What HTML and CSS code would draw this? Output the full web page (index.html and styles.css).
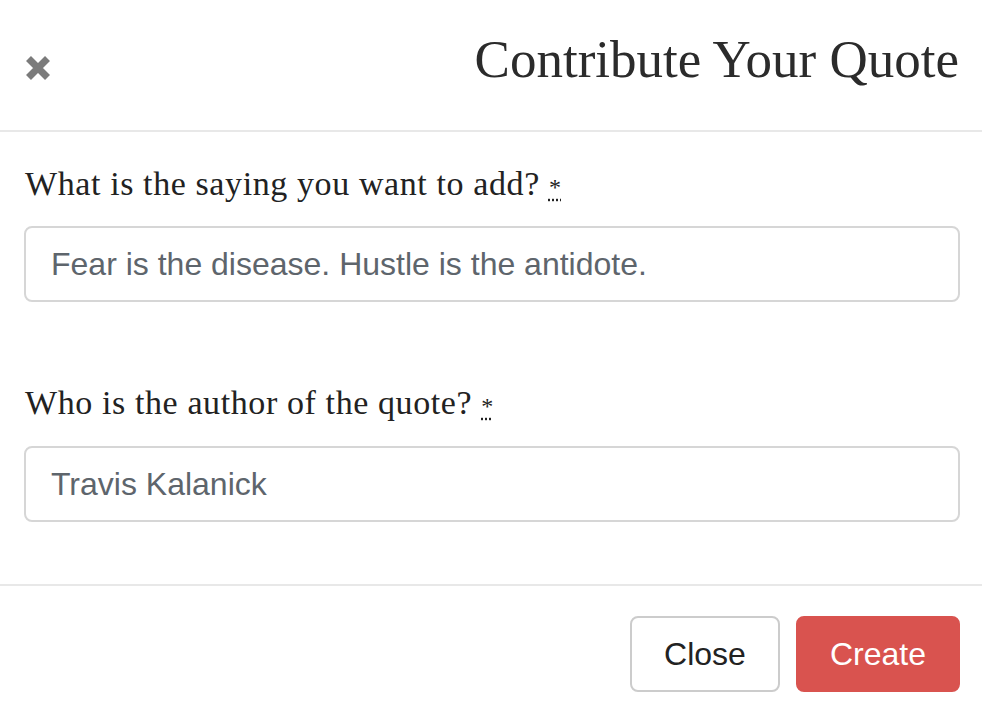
FILE: index.html
```html
<!DOCTYPE html>
<html lang="en">
<head>
<meta charset="utf-8">
<title>Contribute Your Quote</title>
<link rel="stylesheet" href="styles.css">
</head>
<body>
<div class="modal">
  <div class="modal-header">
    <button class="close-btn" type="button" aria-label="Close">
      <svg width="26" height="26" viewBox="0 0 26 26"><path d="M3.5 3.5 L22.5 22.5 M22.5 3.5 L3.5 22.5" stroke="#7b7b7b" stroke-width="7" stroke-linecap="butt" fill="none"/></svg>
    </button>
    <h1 class="title">Contribute Your Quote</h1>
  </div>
  <form class="modal-body">
    <label class="field-label first">What is the saying you want to add? <abbr title="required">*</abbr></label>
    <div class="input first">Fear is the disease. Hustle is the antidote.</div>
    <label class="field-label second">Who is the author of the quote? <abbr title="required">*</abbr></label>
    <div class="input second">Travis Kalanick</div>
  </form>
  <div class="modal-footer">
    <button class="btn btn-default" type="button">Close</button>
    <button class="btn btn-danger" type="button">Create</button>
  </div>
</div>
</body>
</html>
```
FILE: styles.css
```css
html, body {
  margin: 0;
  padding: 0;
  background: #fff;
}
.modal {
  width: 982px;
  height: 716px;
  overflow: hidden;
}
.modal-header {
  height: 130px;
  border-bottom: 2px solid #e8e8e8;
  display: flex;
  justify-content: space-between;
  align-items: flex-start;
  padding: 0 23px 0 25px;
}
.close-btn {
  margin-top: 55px;
  padding: 0;
  border: 0;
  background: none;
  width: 26px;
  height: 26px;
  display: block;
}
.close-btn svg {
  display: block;
}
.title {
  margin: 33px 0 0;
  font-family: "Liberation Serif", serif;
  font-weight: normal;
  font-size: 53px;
  line-height: 1;
  color: #2b2b2b;
}
.modal-body {
  padding: 0 22px 0 24px;
  display: flex;
  flex-direction: column;
  height: 452px;
  box-sizing: border-box;
}
.field-label {
  display: block;
  font-family: "Liberation Serif", serif;
  font-size: 34px;
  letter-spacing: 0.6px;
  line-height: 1;
  color: #222;
  margin-left: 1px;
}
.field-label.first {
  margin-top: 35px;
}
.field-label.second {
  margin-top: 84px;
}
abbr {
  text-decoration: underline dotted;
  text-underline-offset: 4px;
  font-size: 24px;
}
.input {
  height: 76px;
  box-sizing: border-box;
  border: 2px solid #d6d6d6;
  border-radius: 8px;
  padding: 0 25px;
  display: flex;
  align-items: center;
  font-family: "Liberation Sans", Arial, sans-serif;
  font-size: 32px;
  color: #5e656c;
}
.input.first {
  margin-top: 25px;
}
.input.second {
  margin-top: 26px;
}
.modal-footer {
  border-top: 2px solid #e8e8e8;
  display: flex;
  justify-content: flex-end;
  gap: 16px;
  padding: 30px 22px 0 0;
}
.btn {
  height: 76px;
  box-sizing: border-box;
  border-radius: 8px;
  border: 2px solid #cccccc;
  font-family: "Liberation Sans", Arial, sans-serif;
  font-size: 32px;
  padding: 0;
  display: flex;
  align-items: center;
  justify-content: center;
}
.btn-default {
  width: 150px;
  background: #fff;
  color: #222;
}
.btn-danger {
  width: 164px;
  background: #d9534f;
  border-color: #d9534f;
  color: #fff;
}
```
